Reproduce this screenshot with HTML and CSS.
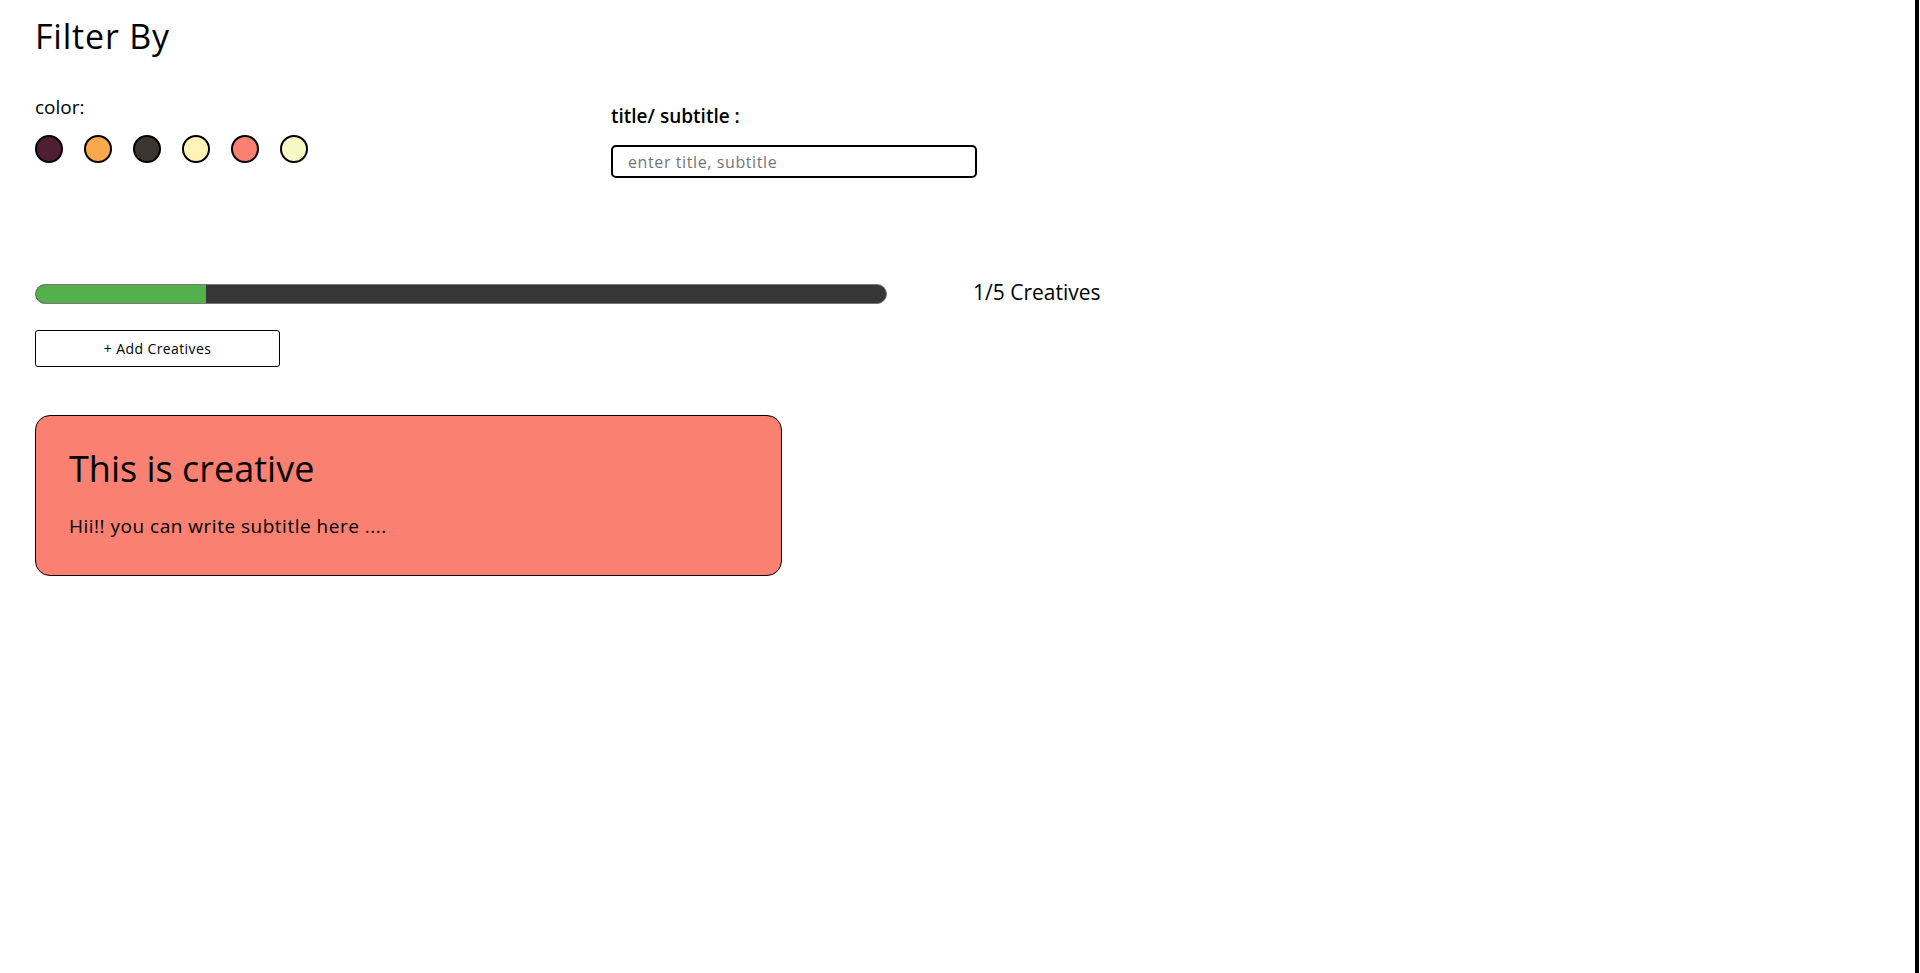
FILE: index.html
```html
<!DOCTYPE html>
<html lang="en">
<head>
<meta charset="utf-8">
<title>Creatives</title>
<link rel="stylesheet" href="styles.css">
</head>
<body>
<div class="app">
  <h1 class="heading">Filter By</h1>
  <div class="filters">
    <div class="color-filter">
      <div class="filter-label">color:</div>
      <div class="swatches">
        <span class="swatch swatch-maroon"></span>
        <span class="swatch swatch-orange"></span>
        <span class="swatch swatch-charcoal"></span>
        <span class="swatch swatch-cream"></span>
        <span class="swatch swatch-salmon"></span>
        <span class="swatch swatch-lime"></span>
      </div>
    </div>
    <div class="text-filter">
      <label class="text-label" for="search">title/ subtitle :</label>
      <input id="search" class="search-input" type="text" placeholder="enter title, subtitle">
    </div>
  </div>
  <div class="progress-row">
    <div class="progress"><div class="progress-fill" style="width:20%"></div></div>
    <span class="progress-text">1/5 Creatives</span>
  </div>
  <button class="add-btn">+ Add Creatives</button>
  <div class="card">
    <h2 class="card-title">This is creative</h2>
    <p class="card-subtitle">Hii!! you can write subtitle here ....</p>
  </div>
</div>
</body>
</html>
```
FILE: styles.css
```css
* { box-sizing: border-box; }
html, body { margin: 0; padding: 0; background: #fff; }
body {
  font-family: "Open Sans", "Noto Sans", sans-serif;
  color: #000;
}
.app {
  width: 1919px;
  min-height: 100vh;
  border-right: 4px solid #000;
  padding: 16px 0 0 35px;
}
.heading {
  margin: 0;
  font-size: 34px;
  line-height: 40px;
  font-weight: 400;
  letter-spacing: 0.8px;
}
.filters {
  display: flex;
  align-items: flex-start;
  margin-top: 39px;
}
.color-filter {
  width: 576px;
}
.filter-label {
  font-size: 19px;
  line-height: 24px;
}
.swatches {
  display: flex;
  gap: 21px;
  margin-top: 16px;
}
.swatch {
  width: 28px;
  height: 28px;
  border-radius: 50%;
  border: 2px solid #000;
}
.swatch-maroon { background: #4e1f30; }
.swatch-orange { background: #f9a94b; }
.swatch-charcoal { background: #3a352f; }
.swatch-cream { background: #fff3b8; }
.swatch-salmon { background: #fa8072; }
.swatch-lime { background: #f7f9c4; }
.text-filter {
  display: flex;
  flex-direction: column;
  padding-top: 9px;
}
.text-label {
  font-size: 19px;
  line-height: 24px;
  font-weight: 600;
}
.search-input {
  margin-top: 17px;
  width: 366px;
  height: 33px;
  border: 2px solid #000;
  border-radius: 5px;
  padding: 0 15px;
  font-family: inherit;
  font-size: 16px;
  letter-spacing: 0.6px;
  outline: none;
}
.search-input::placeholder { color: #757575; }
.progress-row {
  display: flex;
  align-items: center;
  margin-top: 104px;
  gap: 86px;
}
.progress {
  width: 852px;
  height: 20px;
  border: 1px solid #777;
  border-radius: 10px;
  background: #363636;
  overflow: hidden;
}
.progress-fill {
  height: 100%;
  background: #53b04a;
}
.progress-text {
  font-size: 21px;
  line-height: 20px;
  padding-bottom: 4px;
}
.add-btn {
  display: block;
  margin-top: 24px;
  width: 245px;
  height: 37px;
  background: #fff;
  border: 1px solid #000;
  border-radius: 3px;
  font-family: inherit;
  font-size: 14px;
  letter-spacing: 0.4px;
  color: #000;
  cursor: pointer;
}
.card {
  margin-top: 48px;
  width: 747px;
  height: 161px;
  background: #fa8072;
  border: 1px solid #000;
  border-radius: 15px;
  padding: 31px 33px 0;
}
.card-title {
  margin: 0;
  font-size: 36px;
  line-height: 44px;
  font-weight: 400;
}
.card-subtitle {
  margin: 23px 0 0;
  font-size: 19px;
  line-height: 24px;
  letter-spacing: 0.5px;
}
```
